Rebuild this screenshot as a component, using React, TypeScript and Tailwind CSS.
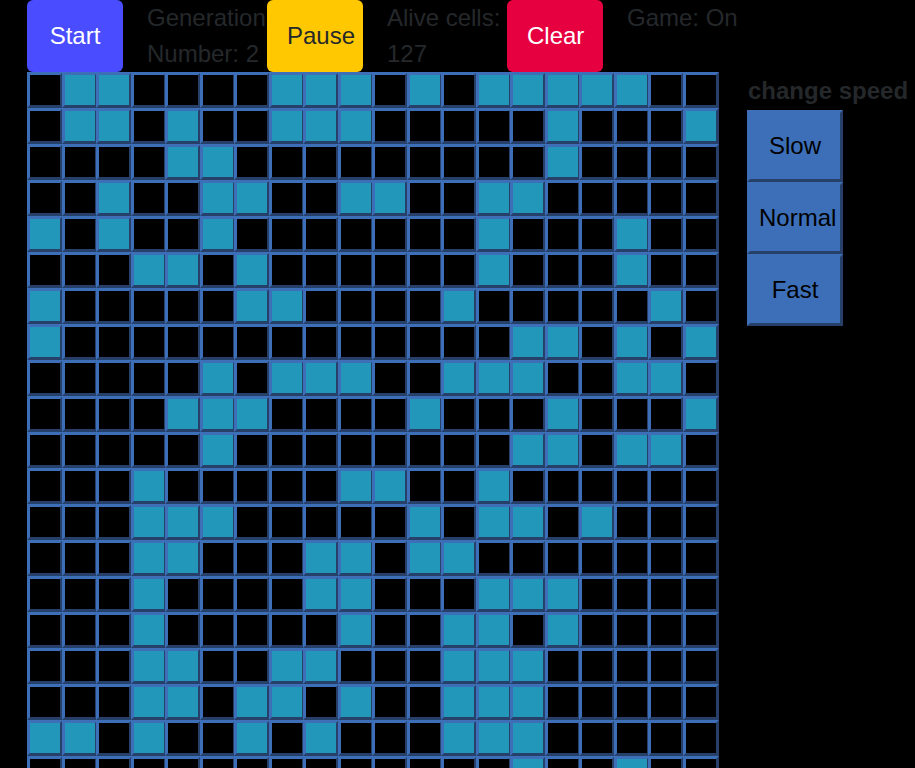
import { useState } from "react";

const COLUMNS = 20;

// Live columns of each row.
const INITIAL_ROWS: number[][] = [
  [1, 2, 7, 8, 9, 11, 13, 14, 15, 16, 17],
  [1, 2, 4, 7, 8, 9, 15, 19],
  [4, 5, 15],
  [2, 5, 6, 9, 10, 13, 14],
  [0, 2, 5, 13, 17],
  [3, 4, 6, 13, 17],
  [0, 6, 7, 12, 18],
  [0, 14, 15, 17, 19],
  [5, 7, 8, 9, 12, 13, 14, 17, 18],
  [4, 5, 6, 11, 15, 19],
  [5, 14, 15, 17, 18],
  [3, 9, 10, 13],
  [3, 4, 5, 11, 13, 14, 16],
  [3, 4, 8, 9, 11, 12],
  [3, 8, 9, 13, 14, 15],
  [3, 9, 12, 13, 15],
  [3, 4, 7, 8, 12, 13, 14],
  [3, 4, 6, 7, 9, 12, 13, 14],
  [0, 1, 3, 6, 8, 12, 13, 14],
  [14, 17],
];

const CONTROL = "h-[72px] w-24 shrink-0 cursor-pointer rounded-md px-5 whitespace-nowrap";
const OUTSET =
  "cursor-pointer border-[3px] border-t-[#3d6fb9] border-r-[#26406a] border-b-[#26406a] border-l-[#3d6fb9]";

function Board() {
  const [cells, setCells] = useState<boolean[]>(() =>
    INITIAL_ROWS.flatMap((row) => Array.from({ length: COLUMNS }, (_, c) => row.includes(c)))
  );
  const toggle = (index: number) =>
    setCells((old) => old.map((alive, i) => (i === index ? !alive : alive)));

  return (
    <div className="mr-[30px] grid grid-cols-20">
      {cells.map((alive, i) => (
        <button
          key={i}
          type="button"
          aria-label={`Row ${Math.floor(i / COLUMNS) + 1}, column ${(i % COLUMNS) + 1}`}
          aria-pressed={alive}
          onClick={() => toggle(i)}
          className={`size-9 ${OUTSET} ${alive ? "bg-[#2397b9]" : "bg-black"}`}
        />
      ))}
    </div>
  );
}

export default function App() {
  return (
    <div className="flex h-screen items-start overflow-hidden bg-black pl-[27px] font-['Liberation_Sans',Arial,sans-serif] text-2xl leading-9 text-[#25282b]">
      <main className="w-[720px] shrink-0">
        <header className="grid grid-cols-6">
          <button type="button" className={`${CONTROL} bg-[#494cff] text-white`}>Start</button>
          <p>Generation Number: 2</p>
          <button type="button" className={`${CONTROL} bg-[#ffc800]`}>Pause</button>
          <p>Alive cells: 127</p>
          <button type="button" className={`${CONTROL} bg-[#e6003f] text-white`}>Clear</button>
          <p>Game: On</p>
        </header>
        <Board />
      </main>
      <aside className="mt-[72px] flex flex-col items-start">
        <h2 className="py-px pl-px font-bold whitespace-nowrap">change speed</h2>
        {["Slow", "Normal", "Fast"].map((speed) => (
          <button
            key={speed}
            type="button"
            className={`h-[72px] w-24 bg-[#3d6fb9] px-[9px] whitespace-nowrap text-black ${OUTSET}`}
          >
            {speed}
          </button>
        ))}
      </aside>
    </div>
  );
}
